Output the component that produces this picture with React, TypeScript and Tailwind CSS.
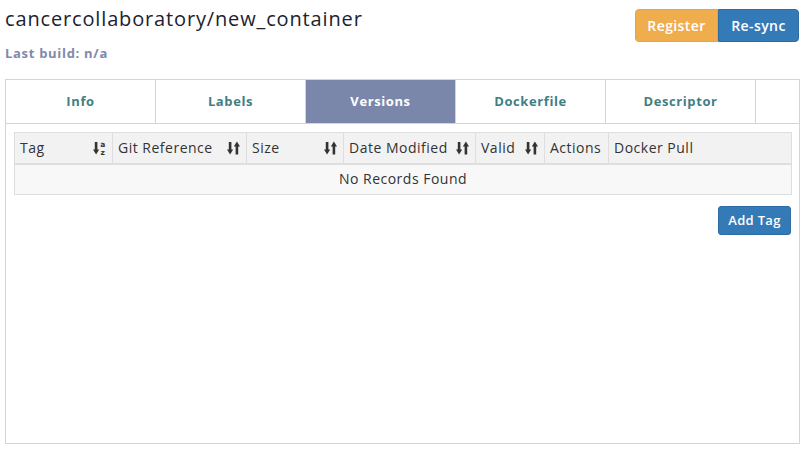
import React from 'react';

const tabs = ['Info', 'Labels', 'Versions', 'Dockerfile', 'Descriptor'];

const columns = [
  { label: 'Tag', width: 98, sort: 'alpha' },
  { label: 'Git Reference', width: 134, sort: 'both' },
  { label: 'Size', width: 97, sort: 'both' },
  { label: 'Date Modified', width: 132, sort: 'both' },
  { label: 'Valid', width: 69, sort: 'both' },
  { label: 'Actions', width: 64, sort: null },
  { label: 'Docker Pull', width: 183, sort: null },
];

function SortIcon() {
  return (
    <svg width="13" height="14" viewBox="0 0 13 14" fill="#333" aria-hidden="true">
      <rect x="1.8" y="1" width="2.6" height="8.5" />
      <polygon points="0,8.5 6.2,8.5 3.1,13.5" />
      <polygon points="6.8,5.5 13,5.5 9.9,0.5" />
      <rect x="8.6" y="4.5" width="2.6" height="9" />
    </svg>
  );
}

function AlphaSortIcon() {
  return (
    <svg width="13" height="14" viewBox="0 0 13 14" fill="#333" aria-hidden="true">
      <rect x="1.8" y="1" width="2.6" height="8.5" />
      <polygon points="0,8.5 6.2,8.5 3.1,13.5" />
      <text x="10" y="6" fontSize="7.5" fontWeight="700" textAnchor="middle" fontFamily="'DejaVu Sans', sans-serif">a</text>
      <text x="10" y="13.5" fontSize="7.5" fontWeight="700" textAnchor="middle" fontFamily="'DejaVu Sans', sans-serif">z</text>
    </svg>
  );
}

export default function App() {
  return (
    <div className="w-[808px] h-[452px] bg-white font-['Open_Sans',sans-serif] text-[#333]">
      <div className="w-[795px] ml-[5px]">
        {/* Header */}
        <div className="flex justify-between h-[79px]">
          <div>
            <h1 className="mt-[5px] text-[20px] leading-[28px] tracking-[0.85px] text-[#1b2232]">
              cancercollaboratory/new_container
            </h1>
            <p className="mt-[11px] text-[13px] leading-[18px] font-bold tracking-[0.7px] text-[#8089ab]">
              Last build: n/a
            </p>
          </div>
          <div className="flex mt-[9px] mr-[1px] h-[33px]">
            <button className="w-[83px] bg-[#f0ad4e] border border-[#eea236] text-white text-[14px] font-semibold tracking-[0.4px] rounded-l-[4px]">
              Register
            </button>
            <button className="w-[81px] bg-[#337ab7] border border-[#2e6da4] text-white text-[14px] font-semibold tracking-[0.4px] rounded-r-[4px]">
              Re-sync
            </button>
          </div>
        </div>

        {/* Panel */}
        <div className="border border-[#d4d4d4] h-[365px]">
          <div className="flex h-[44px] border-b border-[#d4d4d4]">
            {tabs.map((t) => (
              <div
                key={t}
                className={
                  t === 'Versions'
                    ? 'w-[150px] flex items-center justify-center text-[13px] font-bold tracking-[0.6px] bg-[#7a87aa] text-white border-r border-[#d4d4d4]'
                    : 'w-[150px] flex items-center justify-center text-[13px] font-bold tracking-[0.6px] text-[#3f7f84] border-r border-[#d4d4d4]'
                }
              >
                {t}
              </div>
            ))}
            <div className="flex-1" />
          </div>

          <div className="px-[8px] pt-[8px]">
            <table className="w-[777px] table-fixed border-collapse text-[14px] tracking-[0.5px]">
              <colgroup>
                {columns.map((c) => (
                  <col key={c.label} style={{ width: c.width }} />
                ))}
              </colgroup>
              <thead>
                <tr className="bg-[#f2f2f2]">
                  {columns.map((c) => (
                    <th
                      key={c.label}
                      className="h-[31px] border border-[#dedede] border-b-2 pl-[5px] pr-[6px] font-normal text-left"
                    >
                      <div className="flex items-center justify-between">
                        <span>{c.label}</span>
                        {c.sort === 'alpha' && <AlphaSortIcon />}
                        {c.sort === 'both' && <SortIcon />}
                      </div>
                    </th>
                  ))}
                </tr>
              </thead>
              <tbody>
                <tr className="bg-[#f8f8f8]">
                  <td colSpan={7} className="h-[31px] pb-[2px] border border-[#dedede] text-center">
                    No Records Found
                  </td>
                </tr>
              </tbody>
            </table>

            <div className="flex justify-end mt-[11px]">
              <button className="w-[73px] h-[29px] bg-[#337ab7] border border-[#2e6da4] rounded-[3px] text-white text-[13px] font-semibold tracking-[0.3px]">
                Add Tag
              </button>
            </div>
          </div>
        </div>
      </div>
    </div>
  );
}
